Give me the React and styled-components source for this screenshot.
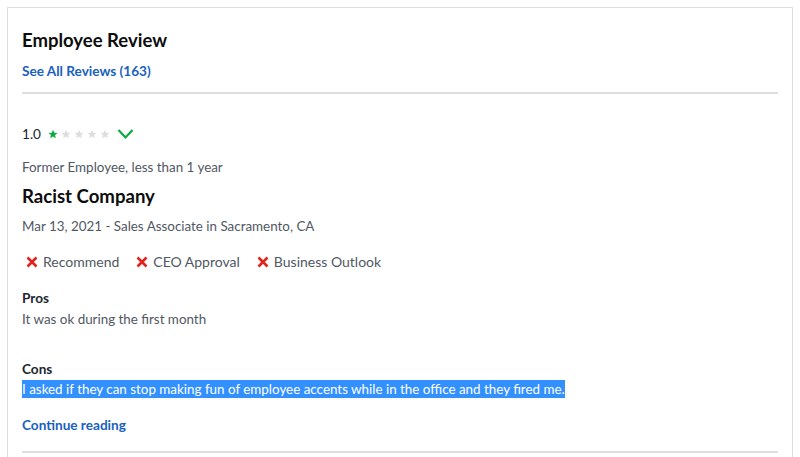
import React from 'react'
import styled, { createGlobalStyle } from 'styled-components'

const GlobalStyle = createGlobalStyle`
  body {
    margin: 0;
    background: #ffffff;
    font-family: Lato, "Liberation Sans", sans-serif;
    color: #20262e;
  }
`

const Page = styled.div`
  padding: 7px 7px 0;
`

const Card = styled.section`
  border: 1px solid #dedede;
  border-bottom: none;
  padding: 0 14px;
  min-height: 450px;
`

const Header = styled.header`
  padding: 21px 0 11px;
  border-bottom: 2px solid #dedede;
`

const Title = styled.h2`
  margin: 0;
  font-size: 18.5px;
  font-weight: 700;
  line-height: 22px;
  color: #0d0d0d;
`

const BlueLink = styled.a`
  display: inline-block;
  color: #1861bf;
  font-weight: 700;
  font-size: 13.6px;
  line-height: 20px;
  text-decoration: none;
  margin-top: ${p => p.$top || 0}px;
`

const Review = styled.article`
  padding: 30px 0 16px;
  border-bottom: 2px solid #dedede;
`

const RatingRow = styled.div`
  display: flex;
  align-items: center;
  gap: 7px;
  height: 20px;
`

const RatingValue = styled.span`
  font-size: 13.6px;
  color: #20262e;
`

const Stars = styled.span`
  display: flex;
  gap: 3px;
`

const Meta = styled.div`
  font-size: 13.4px;
  line-height: 20px;
  color: #505863;
  margin-top: ${p => p.$top || 0}px;
`

const Headline = styled.h3`
  margin: 7px 0 0;
  font-size: 18.6px;
  line-height: 24px;
  font-weight: 700;
  color: #0d0d0d;
`

const Flags = styled.div`
  display: flex;
  gap: 13px;
  margin-top: 16px;
`

const Flag = styled.span`
  display: flex;
  align-items: center;
  gap: 5px;
  font-size: 14px;
  line-height: 20px;
  color: #505863;
  padding-left: 4px;
`

const Label = styled.div`
  font-size: 13.6px;
  font-weight: 700;
  line-height: 20px;
  color: #20262e;
  margin-top: ${p => p.$top || 0}px;
`

const Body = styled.p`
  margin: ${p => p.$top || 0}px 0 0;
  font-size: 13.4px;
  line-height: 20px;
  color: #505863;
`

const Selected = styled.span`
  background: #3390ff;
  color: #ffffff;
  padding: 1px 0 1px;
`

const Star = ({ on }) => (
  <svg width="10" height="10" viewBox="0 0 24 24">
    <path
      fill={on ? '#0caa41' : '#dedede'}
      d="M12 1.5l3.1 7.2 7.7.6-5.9 5.1 1.8 7.6L12 18l-6.7 4 1.8-7.6-5.9-5.1 7.7-.6z"
    />
  </svg>
)

const Check = () => (
  <svg width="17" height="12" viewBox="0 0 17 12">
    <path d="M1.5 2l7 7.5 7-7.5" fill="none" stroke="#0caa41" strokeWidth="2.2" />
  </svg>
)

const Cross = () => (
  <svg width="12" height="12" viewBox="0 0 12 12">
    <path d="M1.5 1.5l9 9M10.5 1.5l-9 9" stroke="#e0231c" strokeWidth="2.6" />
  </svg>
)

export default function App() {
  return (
    <>
      <GlobalStyle />
      <Page>
        <Card>
          <Header>
            <Title>Employee Review</Title>
            <BlueLink href="#" $top={10}>See All Reviews (163)</BlueLink>
          </Header>
          <Review>
            <RatingRow>
              <RatingValue>1.0</RatingValue>
              <Stars>
                {[1, 2, 3, 4, 5].map(i => <Star key={i} on={i === 1} />)}
              </Stars>
              <Check />
            </RatingRow>
            <Meta $top={13}>Former Employee, less than 1 year</Meta>
            <Headline>Racist Company</Headline>
            <Meta $top={8}>Mar 13, 2021 - Sales Associate in Sacramento, CA</Meta>
            <Flags>
              <Flag><Cross />Recommend</Flag>
              <Flag><Cross />CEO Approval</Flag>
              <Flag><Cross />Business Outlook</Flag>
            </Flags>
            <Label $top={16}>Pros</Label>
            <Body $top={1}>It was ok during the first month</Body>
            <Label $top={30}>Cons</Label>
            <Body>
              <Selected>I asked if they can stop making fun of employee accents while in the office and they fired me.</Selected>
            </Body>
            <BlueLink href="#" $top={16}>Continue reading</BlueLink>
          </Review>
        </Card>
      </Page>
    </>
  )
}
